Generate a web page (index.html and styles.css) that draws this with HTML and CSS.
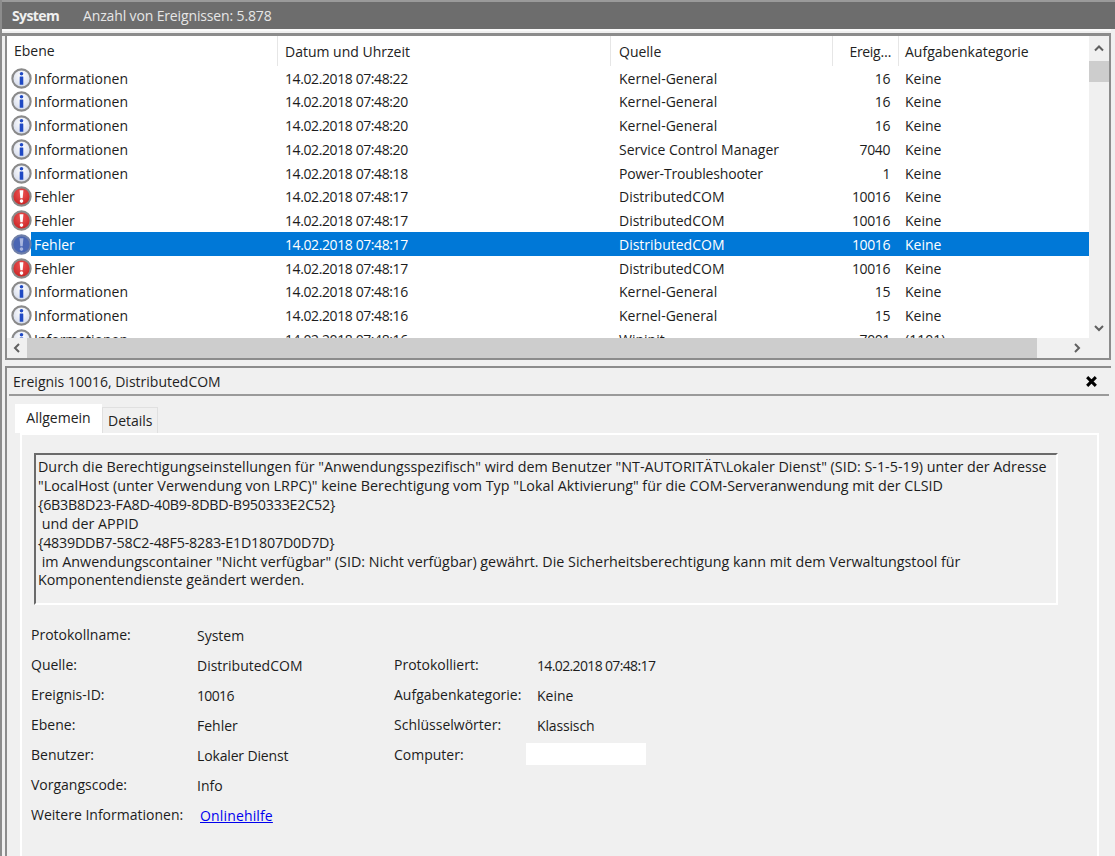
FILE: index.html
```html
<!DOCTYPE html>
<html lang="de">
<head>
<meta charset="utf-8">
<title>Ereignisanzeige</title>
<link rel="stylesheet" href="styles.css">
</head>
<body>
<svg width="0" height="0" class="defs">
  <defs>
    <radialGradient id="ig" cx="50%" cy="35%" r="70%"><stop offset="0" stop-color="#ffffff"/><stop offset="1" stop-color="#cfd6e8"/></radialGradient>
    <radialGradient id="eg" cx="50%" cy="35%" r="70%"><stop offset="0" stop-color="#ee5555"/><stop offset="1" stop-color="#c41d1d"/></radialGradient>
    <symbol id="info" viewBox="0 0 20 20">
      <circle cx="10" cy="10" r="8.7" fill="url(#ig)" stroke="#8a8a8a" stroke-width="2"/>
      <circle cx="10" cy="5.5" r="1.7" fill="#1f49c4"/>
      <rect x="8.3" y="8" width="3.4" height="8" rx=".4" fill="#1f49c4"/>
    </symbol>
    <symbol id="err" viewBox="0 0 20 20">
      <circle cx="10" cy="10" r="8.7" fill="url(#eg)" stroke="#8a8a8a" stroke-width="2"/>
      <path d="M8.2 4h3.6l-.7 7.6H8.9z" fill="#fff"/>
      <circle cx="10" cy="14.4" r="1.7" fill="#fff"/>
    </symbol>
    <symbol id="errsel" viewBox="0 0 20 20">
      <circle cx="10" cy="10" r="8.7" fill="#4a66b4" stroke="#6f7fa8" stroke-width="2"/>
      <path d="M8.2 4h3.6l-.7 7.6H8.9z" fill="#a9b6df"/>
      <circle cx="10" cy="14.4" r="1.7" fill="#a9b6df"/>
    </symbol>
  </defs>
</svg>
<header class="topbar"><b class="top-name">System</b><span class="top-count">Anzahl von Ereignissen: 5.878</span></header>
<div class="top-gap"></div>
<section class="listbox">
  <div class="list-main">
    <div class="list-view">
      <div class="row head">
        <span class="c1 hc">Ebene</span><span class="c2 hc">Datum und Uhrzeit</span><span class="c3 hc">Quelle</span><span class="c4 hc">Ereig…</span><span class="c5 hc">Aufgabenkategorie</span>
      </div>
      <div class="rows">
        <div class="row"><span class="c1"><svg class="ico"><use href="#info"/></svg>Informationen</span><span class="c2 num">14.02.2018 07:48:22</span><span class="c3">Kernel-General</span><span class="c4 num">16</span><span class="c5">Keine</span></div>
        <div class="row"><span class="c1"><svg class="ico"><use href="#info"/></svg>Informationen</span><span class="c2 num">14.02.2018 07:48:20</span><span class="c3">Kernel-General</span><span class="c4 num">16</span><span class="c5">Keine</span></div>
        <div class="row"><span class="c1"><svg class="ico"><use href="#info"/></svg>Informationen</span><span class="c2 num">14.02.2018 07:48:20</span><span class="c3">Kernel-General</span><span class="c4 num">16</span><span class="c5">Keine</span></div>
        <div class="row"><span class="c1"><svg class="ico"><use href="#info"/></svg>Informationen</span><span class="c2 num">14.02.2018 07:48:20</span><span class="c3">Service Control Manager</span><span class="c4 num">7040</span><span class="c5">Keine</span></div>
        <div class="row"><span class="c1"><svg class="ico"><use href="#info"/></svg>Informationen</span><span class="c2 num">14.02.2018 07:48:18</span><span class="c3 tight">Power-Troubleshooter</span><span class="c4 num">1</span><span class="c5">Keine</span></div>
        <div class="row"><span class="c1"><svg class="ico"><use href="#err"/></svg>Fehler</span><span class="c2 num">14.02.2018 07:48:17</span><span class="c3">DistributedCOM</span><span class="c4 num">10016</span><span class="c5">Keine</span></div>
        <div class="row"><span class="c1"><svg class="ico"><use href="#err"/></svg>Fehler</span><span class="c2 num">14.02.2018 07:48:17</span><span class="c3">DistributedCOM</span><span class="c4 num">10016</span><span class="c5">Keine</span></div>
        <div class="row selected"><span class="c1"><svg class="ico"><use href="#errsel"/></svg>Fehler</span><span class="c2 num">14.02.2018 07:48:17</span><span class="c3">DistributedCOM</span><span class="c4 num">10016</span><span class="c5">Keine</span></div>
        <div class="row"><span class="c1"><svg class="ico"><use href="#err"/></svg>Fehler</span><span class="c2 num">14.02.2018 07:48:17</span><span class="c3">DistributedCOM</span><span class="c4 num">10016</span><span class="c5">Keine</span></div>
        <div class="row"><span class="c1"><svg class="ico"><use href="#info"/></svg>Informationen</span><span class="c2 num">14.02.2018 07:48:16</span><span class="c3">Kernel-General</span><span class="c4 num">15</span><span class="c5">Keine</span></div>
        <div class="row"><span class="c1"><svg class="ico"><use href="#info"/></svg>Informationen</span><span class="c2 num">14.02.2018 07:48:16</span><span class="c3">Kernel-General</span><span class="c4 num">15</span><span class="c5">Keine</span></div>
        <div class="row"><span class="c1"><svg class="ico"><use href="#info"/></svg>Informationen</span><span class="c2 num">14.02.2018 07:48:16</span><span class="c3">Wininit</span><span class="c4 num">7001</span><span class="c5">(1101)</span></div>
      </div>
    </div>
    <div class="vscroll">
      <svg class="arrow" viewBox="0 0 20 20"><path d="M6 12l4-4 4 4" /></svg>
      <div class="vthumb"></div>
      <div class="grow"></div>
      <svg class="arrow" viewBox="0 0 20 20"><path d="M6 8l4 4 4-4" /></svg>
    </div>
  </div>
  <div class="hscroll">
    <svg class="arrow" viewBox="0 0 20 20"><path d="M12 6l-4 4 4 4" /></svg>
    <div class="hthumb"></div>
    <svg class="arrow arrow-right" viewBox="0 0 20 20"><path d="M8 6l4 4-4 4" /></svg>
  </div>
</section>
<section class="detail">
  <div class="detail-title"><span>Ereignis 10016, DistributedCOM</span>
    <svg class="close" viewBox="0 0 12 12"><path d="M2 2l8 8M10 2l-8 8"/></svg>
  </div>
  <nav class="tabs"><span class="tab active">Allgemein</span><span class="tab">Details</span></nav>
  <div class="tabpage">
    <div class="message">Durch die Berechtigungseinstellungen für "Anwendungsspezifisch" wird dem Benutzer "NT-AUTORITÄT\Lokaler Dienst" (SID: S-1-5-19) unter der Adresse "LocalHost (unter Verwendung von LRPC)" keine Berechtigung vom Typ "Lokal Aktivierung" für die COM-Serveranwendung mit der CLSID
<span class="hex">{6B3B8D23-FA8D-40B9-8DBD-B950333E2C52}</span>
 und der APPID
<span class="hex">{4839DDB7-58C2-48F5-8283-E1D1807D0D7D}</span>
 im Anwendungscontainer "Nicht verfügbar" (SID: Nicht verfügbar) gewährt. Die Sicherheitsberechtigung kann mit dem Verwaltungstool für Komponentendienste geändert werden.</div>
    <div class="fields">
      <dl class="col col-left">
        <dt>Protokollname:</dt><dd>System</dd>
        <dt>Quelle:</dt><dd>DistributedCOM</dd>
        <dt>Ereignis-ID:</dt><dd class="numval">10016</dd>
        <dt>Ebene:</dt><dd>Fehler</dd>
        <dt>Benutzer:</dt><dd class="tight">Lokaler Dienst</dd>
        <dt>Vorgangscode:</dt><dd>Info</dd>
        <dt>Weitere Informationen:</dt><dd class="linkcell"><a href="#">Onlinehilfe</a></dd>
      </dl>
      <dl class="col col-right">
        <dt>Protokolliert:</dt><dd class="numval">14.02.2018 07:48:17</dd>
        <dt>Aufgabenkategorie:</dt><dd>Keine</dd>
        <dt>Schlüsselwörter:</dt><dd class="tight">Klassisch</dd>
        <dt>Computer:</dt><dd class="redact-cell"><span class="redact"></span></dd>
      </dl>
    </div>
  </div>
</section>
</body>
</html>
```
FILE: styles.css
```css
* { box-sizing: border-box; }
html, body { margin: 0; padding: 0; }
body {
  width: 1115px; height: 856px; overflow: hidden;
  background: #f0f0f0;
  font-family: "Open Sans", "Noto Sans", sans-serif;
  font-size: 14px; color: #1c1c1c;
  border-left: 2px solid #8c8c8c;
}
.defs { position: absolute; }
.topbar {
  height: 29px; margin-left: -2px; background: #6d6d6d;
  border-top: 2px solid #9a9a9a;
  display: flex; align-items: center; color: #f0f0f0; padding-left: 12px;
}
.top-name { font-weight: 700; width: 71px; letter-spacing: -0.6px; }
.top-count { color: #e6e6e6; letter-spacing: -0.14px; }
.top-gap { height: 7px; border-top: 2px solid #fafafa; border-bottom: 3px solid #8c8c8c; margin-left: -2px; margin-right: 4px; }
.listbox {
  margin-left: 3px; width: 1106px; height: 324px;
  border: 2px solid #8c8c8c; border-top: 0; background: #fff;
  display: flex; flex-direction: column;
}
.list-main { display: flex; height: 302px; }
.list-view { flex: 1; overflow: hidden; }
.row { display: flex; height: 23.73px; align-items: center; white-space: nowrap; }
.row span { display: block; }
.head { height: 30.4px; color: #222; }
.hc { height: 30.4px; line-height: 31.5px; border-right: 1px solid #e6e6e6; }
.rows { height: 271.6px; overflow: hidden; }
.c1 { width: 271px; padding-left: 4px; display: flex !important; align-items: center; }
.head .c1 { padding-left: 7px; }
.c2 { width: 333px; padding-left: 7px; }
.c3 { width: 222px; padding-left: 8px; }
.c4 { width: 66px; text-align: right; padding-right: 9px; }
.head .c4 { padding-right: 7px; letter-spacing: -0.3px; }
.c5 { flex: 1; padding-left: 6px; border-right: 0; }
.num { letter-spacing: -0.4px; }
.tight { letter-spacing: -0.15px; }
.ico { width: 21px; height: 21px; margin-right: 2px; flex: none; }
.selected { background: linear-gradient(#0078d7, #0078d7) no-repeat 24px 0 / 100% 100%; color: #fff; }
.vscroll { width: 20px; background: #f0f0f0; display: flex; flex-direction: column; align-items: stretch; }
.arrow { width: 20px; height: 20px; flex: none; display: block; fill: none; stroke: #606060; stroke-width: 2; }
.vscroll .arrow:first-child { height: 25px; }
.vthumb { height: 21px; background: #cdcdcd; flex: none; }
.grow { flex: 1; }
.hscroll { height: 20px; display: flex; background: #f0f0f0; }
.hthumb { width: 1010px; background: #cdcdcd; margin-left: 0; flex: none; }
.arrow-right { margin-left: 30px; }
.detail {
  margin: 6px 0 0 3px; width: 1106px;
  border-top: 2px solid #8c8c8c; height: 490px; position: relative;
  border-left: 2px solid #8c8c8c;
  padding-left: 0;
}
.detail-title {
  height: 28px; margin: 0 2px 0 2px; padding-left: 4px;
  display: flex; align-items: center; justify-content: space-between;
  border-bottom: 2px solid #9a9a9a; color: #1f1f1f;
}
.close { width: 13px; height: 13px; margin-right: 11px; fill: none; stroke: #000; stroke-width: 2.8; }
.tabs { display: flex; align-items: flex-end; height: 37px; margin-left: 8px; }
.tab { height: 26px; padding: 0 5px; line-height: 25px; background: #f0f0f0; border: 1px solid #e0e0e0; border-bottom: 0; color: #222; width: 56px; text-align: center; }
.tab.active { height: 29px; width: 87px; background: #fff; line-height: 28px; border: 0; }
.tabpage {
  margin-left: 13px; width: 1079px; height: 430px;
  border: 2px solid #fff; border-bottom: 0;
  padding: 18px 0 0 12px;
}
.message {
  width: 1024px; height: 152px;
  border: 2px solid #fff; border-top-color: #6a6a6a; border-left-color: #6a6a6a;
  padding: 3px 3px 0 2px; font-size: 14.3px; line-height: 18.9px; white-space: pre-wrap;
}
.hex { letter-spacing: -0.22px; }
.fields { display: flex; margin-left: -3px; }
.col { margin: 0; display: grid; column-gap: 0; grid-auto-rows: 30px; align-items: center; }
.col-left { grid-template-columns: 166px 197px; margin-top: 15px; }
.col-right { grid-template-columns: 143px 300px; margin-top: 45px; }
dt { color: #1c1c1c; transform: translateY(-1px); }
dd { margin: 0; }
.numval { letter-spacing: -0.64px; }
.linkcell { padding-left: 3px; letter-spacing: 0.15px; }
a { color: #0000ee; }
.redact-cell { margin-left: -11px; }
.redact { display: block; width: 120px; height: 22px; background: #fff; margin-top: -2px; }
```
